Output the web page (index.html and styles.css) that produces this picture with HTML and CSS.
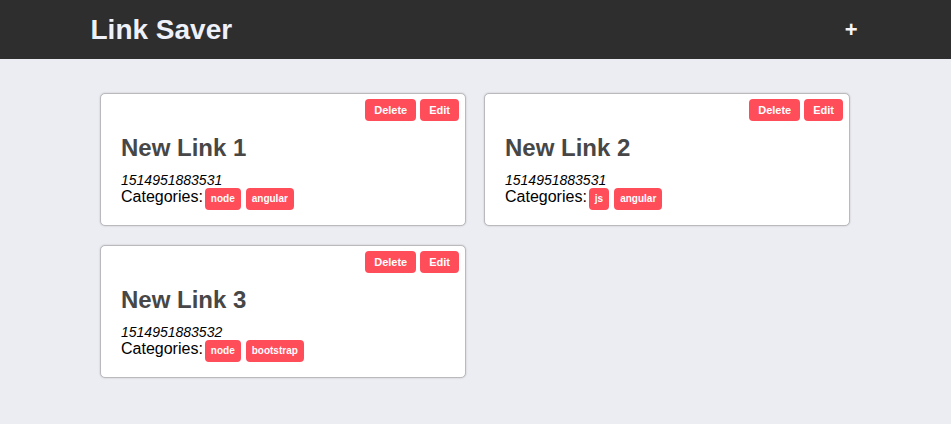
FILE: index.html
```html
<!DOCTYPE html>
<html lang="en">
<head>
<meta charset="utf-8">
<title>Link Saver</title>
<link rel="stylesheet" href="styles.css">
</head>
<body>
<header class="topbar">
  <div class="topbar-inner">
    <h1 class="brand">Link Saver</h1>
    <button class="add-btn" type="button">+</button>
  </div>
</header>
<main class="content">
  <div class="grid">
    <article class="card">
      <div class="actions">
        <button class="btn" type="button">Delete</button>
        <button class="btn" type="button">Edit</button>
      </div>
      <h2 class="card-title">New Link 1</h2>
      <div class="stamp">1514951883531</div>
      <div class="cats">Categories:<span class="tag">node</span><span class="tag">angular</span></div>
    </article>
    <article class="card">
      <div class="actions">
        <button class="btn" type="button">Delete</button>
        <button class="btn" type="button">Edit</button>
      </div>
      <h2 class="card-title">New Link 2</h2>
      <div class="stamp">1514951883531</div>
      <div class="cats">Categories:<span class="tag">js</span><span class="tag">angular</span></div>
    </article>
    <article class="card">
      <div class="actions">
        <button class="btn" type="button">Delete</button>
        <button class="btn" type="button">Edit</button>
      </div>
      <h2 class="card-title">New Link 3</h2>
      <div class="stamp">1514951883532</div>
      <div class="cats">Categories:<span class="tag">node</span><span class="tag">bootstrap</span></div>
    </article>
  </div>
</main>
</body>
</html>
```
FILE: styles.css
```css
* { box-sizing: border-box; }
html, body {
  margin: 0;
  padding: 0;
}
body {
  background: #ecedf2;
  font-family: "Liberation Sans", Arial, Helvetica, sans-serif;
  color: #000;
}
.topbar {
  background: #2e2e2e;
  height: 59px;
}
.topbar-inner {
  width: 770px;
  margin: 0 auto;
  height: 100%;
  display: flex;
  align-items: center;
  justify-content: space-between;
}
.brand {
  margin: 0;
  font-size: 28px;
  font-weight: bold;
  color: #eef0fa;
  line-height: 1;
  padding-top: 1px;
}
.add-btn {
  background: none;
  border: 0;
  padding: 0;
  margin-right: 3px;
  color: #f4f5fb;
  font-family: "Liberation Sans", Arial, sans-serif;
  font-weight: bold;
  font-size: 22px;
  line-height: 1;
  cursor: pointer;
}
.content {
  width: 770px;
  margin: 0 auto;
  padding: 34px 10px;
}
.grid {
  display: grid;
  grid-template-columns: 366px 366px;
  column-gap: 18px;
  row-gap: 19px;
  margin-left: -0.5px;
}
.card {
  background: #fff;
  border: 1px solid #b9b9be;
  border-radius: 5px;
  box-shadow: 0 0 2px rgba(0, 0, 0, 0.2);
  padding: 5px 6px 15px 20px;
}
.actions {
  display: flex;
  justify-content: flex-end;
  gap: 4px;
}
.btn {
  background: #ff4d5a;
  color: #fff;
  border: 0;
  border-radius: 4px;
  height: 22px;
  padding: 0 9px;
  font-family: "Liberation Sans", Arial, sans-serif;
  font-size: 11px;
  font-weight: bold;
  line-height: 22px;
}
.card-title {
  margin: 13px 0 10px;
  font-size: 24px;
  font-weight: bold;
  color: #474747;
  line-height: normal;
}
.stamp {
  font-size: 14px;
  font-style: italic;
  line-height: normal;
}
.cats {
  font-size: 16px;
  line-height: normal;
}
.tag {
  display: inline-block;
  background: #ff4d5a;
  color: #fff;
  font-size: 10px;
  font-weight: bold;
  line-height: 22px;
  padding: 0 6px;
  border-radius: 4px;
  margin-left: 5px;
}
.cats .tag:first-child { margin-left: 2px; }
```
